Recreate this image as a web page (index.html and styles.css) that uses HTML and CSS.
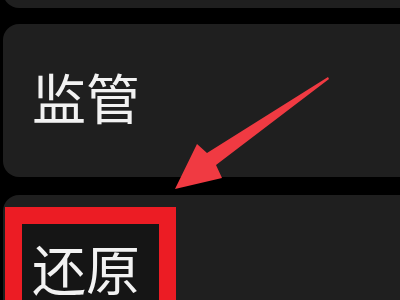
FILE: index.html
```html
<!DOCTYPE html>
<html lang="zh">
<head>
<meta charset="utf-8">
<link rel="stylesheet" href="styles.css">
</head>
<body>
<div class="list">
  <div class="card card-top"></div>
  <div class="card card-mid"><span class="label">监管</span></div>
  <div class="card card-bottom"><span class="label boxed">还原</span></div>
</div>
<svg class="arrow" width="400" height="300" viewBox="0 0 400 300">
  <polygon points="328,77 207,153 197,144 175,189 222,178 216,165 329,79" fill="#f03a42"/>
</svg>
</body>
</html>
```
FILE: styles.css
```css
html, body {
  margin: 0;
  padding: 0;
  background: #000;
  width: 400px;
  height: 300px;
  overflow: hidden;
  position: relative;
  font-family: "Noto Sans CJK SC", "Noto Sans", sans-serif;
}
.list {
  display: flex;
  flex-direction: column;
}
.card {
  background: #1f1f1f;
  margin-left: 3px;
  margin-right: -20px;
  border-radius: 16px;
}
.card-top {
  height: 40px;
  margin-top: -32px;
}
.card-mid {
  margin-top: 16px;
  height: 153px;
  box-sizing: border-box;
  display: flex;
  align-items: center;
  padding-left: 29px;
  padding-bottom: 7px;
}
.card-bottom {
  margin-top: 18px;
  height: 160px;
  padding-top: 12px;
  padding-left: 2px;
}
.label {
  color: #f2f2f2;
  font-size: 54px;
  line-height: 1;
  letter-spacing: 0;
}
.boxed {
  display: inline-block;
  border: 17px solid #ec1c24;
  background: #151515;
  padding: 17px 19px 10px 10px;
}
.arrow {
  position: absolute;
  left: 0;
  top: 0;
}
```
